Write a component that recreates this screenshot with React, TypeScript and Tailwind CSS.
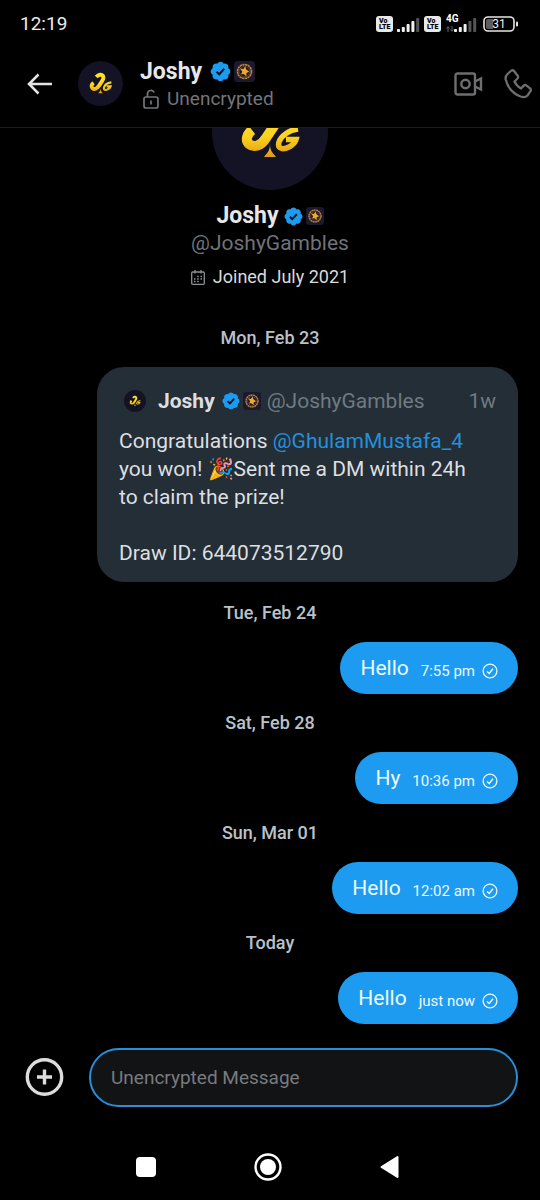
import React from 'react';

function JoshyLogo({ className }: { className: string }) {
  return (
    <svg viewBox="0 0 116 116" className={className} role="img" aria-label="Joshy">
      <defs>
        <linearGradient id="gold" gradientUnits="userSpaceOnUse" x1="0" y1="30" x2="0" y2="84">
          <stop offset="0" stopColor="#ffe32e" />
          <stop offset=".6" stopColor="#fcd31f" />
          <stop offset="1" stopColor="#dc9a12" />
        </linearGradient>
      </defs>
      <circle cx="58" cy="58" r="58" fill="#131325" />
      <g fill="none" stroke="url(#gold)">
        <path d="M47 41C53 34 61 34 64 38C67 42 66 46 62 52L54 64C49 72 42 74 37 70C33 66 35 60 40 56" strokeWidth="10" />
        <path d="M86 55C77 56 69 62 67 68C65 75 71 76 77 73C81 71 83 69 84 65.500H74" strokeWidth="5.500" />
      </g>
      <path d="M58 70C58 77 61 79 64 83H52C55 79 58 77 58 70Z" fill="url(#gold)" />
    </svg>
  );
}

function VerifiedBadge({ className }: { className: string }) {
  return (
    <svg viewBox="0 0 22 22" className={className} role="img" aria-label="Verified">
      <path
        fill="#1d9bf0"
        d="M20.396 11c-.018-.646-.215-1.275-.57-1.816-.354-.54-.852-.972-1.438-1.246.223-.607.27-1.264.14-1.897-.131-.634-.437-1.218-.882-1.687-.47-.445-1.053-.75-1.687-.882-.633-.13-1.29-.083-1.897.14-.273-.587-.704-1.086-1.245-1.44S11.647 1.62 11 1.604c-.646.017-1.273.213-1.813.568s-.969.854-1.24 1.44c-.608-.223-1.267-.272-1.902-.14-.635.13-1.22.436-1.69.882-.445.47-.749 1.055-.878 1.688-.13.633-.08 1.29.144 1.896-.587.274-1.087.705-1.443 1.245-.356.54-.555 1.17-.574 1.817.02.647.218 1.276.574 1.817.356.54.856.972 1.443 1.245-.224.606-.274 1.263-.144 1.896.13.634.433 1.218.877 1.688.47.443 1.054.747 1.687.878.633.132 1.29.084 1.897-.136.274.586.705 1.084 1.246 1.439.54.354 1.17.551 1.816.569.647-.016 1.276-.213 1.817-.567s.972-.854 1.245-1.44c.604.239 1.266.296 1.903.164.636-.132 1.22-.447 1.68-.907.46-.46.776-1.044.908-1.681s.075-1.299-.165-1.903c.586-.274 1.084-.705 1.439-1.246.354-.54.551-1.17.569-1.816z"
      />
      <path d="M7.2 11.2L9.8 13.7L14.5 8.4" fill="none" stroke="#07131c" strokeWidth="2" />
    </svg>
  );
}

function AffiliateBadge({ className }: { className: string }) {
  return (
    <svg viewBox="0 0 22 22" className={className} role="img" aria-label="Affiliate">
      <rect width="22" height="22" rx="4" fill="#1b1830" />
      <circle cx="11" cy="11" r="7.3" fill="none" stroke="#b88338" strokeWidth="1.8" strokeDasharray="2.4 .5" />
      <circle cx="11" cy="11" r="5.4" fill="none" stroke="#79502a" strokeWidth=".7" />
      <path d="M6.200 7.500L9.500 8.600L11.800 5.600L12.600 8.700L16 11.300L13 12.700L13.100 16.200L10.200 13.700L7.400 14L8.700 11.200Z" fill="#f0a72b" />
    </svg>
  );
}

function VoLte() {
  return (
    <span className="flex h-4 w-[17px] flex-col justify-center rounded-[3px] bg-[#e8e8e8] pl-[3px] text-[7px] leading-[6px] font-black text-black">
      <span>Vo</span>
      <span>LTE</span>
    </span>
  );
}

function Signal({ lit, className }: { lit: number; className: string }) {
  const bars = [3, 5, 8, 11, 14];
  return (
    <svg viewBox="0 0 23 15" className={className} aria-hidden="true">
      {bars.map((h, i) => (
        <rect key={h} x={i * 4.8} y={15 - h} width="3" height={h} rx=".8" fill={i < lit ? '#f0f0f0' : '#555'} />
      ))}
    </svg>
  );
}

function StatusBar() {
  return (
    <div className="flex h-12 shrink-0 items-center justify-between pr-[22px] pl-5">
      <span className="text-[19px] leading-6 text-[#ececec]">12:19</span>
      <div className="flex items-center">
        <VoLte />
        <Signal lit={4} className="ml-1 h-[15px] w-[23px]" />
        <span className="ml-1 flex">
          <VoLte />
        </span>
        <div className="relative ml-[5px] flex h-4 w-[31px] items-end justify-end">
          <Signal lit={3} className="h-[15px] w-[23px]" />
          <span className="absolute -top-[2px] left-0 text-[10px] leading-[10px] font-bold text-white">4G</span>
          <svg viewBox="0 0 8 6" className="absolute bottom-0 left-0 h-[6px] w-2" aria-hidden="true">
            <path d="M2 6V1M.5 2.5L2 .7L3.5 2.5M6 0V5M4.5 3.5L6 5.3L7.500 3.500" stroke="#666" fill="none" />
          </svg>
        </div>
        <svg viewBox="0 0 35 16" className="ml-[6px] h-4 w-[35px]" role="img" aria-label="Battery 31 percent">
          <rect x="1" y="1" width="30" height="14" rx="4" fill="none" stroke="#e6e6e6" strokeWidth="1.600" />
          <path d="M5 3h5v10H5a2 2 0 0 1-2-2V5a2 2 0 0 1 2-2z" fill="#5c5c5c" />
          <rect x="33" y="5.500" width="2" height="5" rx="1" fill="#e6e6e6" />
          <text x="16" y="12" textAnchor="middle" fontSize="12" fill="#f2f2f2">31</text>
        </svg>
      </div>
    </div>
  );
}

function Header() {
  return (
    <header className="flex h-20 shrink-0 items-center border-b border-[#1c1c1e] pr-2 pb-2 pl-[26px]">
      <button aria-label="Back" className="h-7 w-7 shrink-0">
        <svg viewBox="0 0 28 28" className="h-7 w-7">
          <path d="M26 14H3M12.500 4.500L3 14L12.500 23.500" fill="none" stroke="#e4e4e4" strokeWidth="2.500" />
        </svg>
      </button>
      <JoshyLogo className="ml-6 h-[45px] w-[45px] shrink-0" />
      <div className="ml-[17px] flex-1 pt-[2px]">
        <div className="flex items-center">
          <h1 className="text-[23px] leading-7 font-bold text-[#e7e7e8]">Joshy</h1>
          <VerifiedBadge className="ml-[7px] h-[23px] w-[23px]" />
          <AffiliateBadge className="ml-[2px] h-[21px] w-[21px]" />
        </div>
        <div className="flex items-center text-[19px] leading-[26px] text-[#737579]">
          <svg viewBox="0 0 16 20" className="ml-[3px] h-5 w-4" fill="none" stroke="currentColor" strokeWidth="1.700" aria-hidden="true">
            <rect x="1" y="8" width="14" height="11" rx="2" />
            <path d="M4.500 8V5A3.500 3.500 0 0 1 11.200 3.500M8 11.500V15.500" />
          </svg>
          <span className="ml-2">Unencrypted</span>
        </div>
      </div>
      <button aria-label="Video call" className="h-6 w-[29px] shrink-0 text-[#6e6e70]">
        <svg viewBox="0 0 29 24" className="h-6 w-[29px]" fill="none" stroke="currentColor" strokeWidth="2.400">
          <rect x="1.500" y="1.500" width="19.500" height="21" rx="2" />
          <circle cx="11.500" cy="12" r="4.200" />
          <path d="M21 9.500L27 6.500V17.500L21 14.500" />
        </svg>
      </button>
      <button aria-label="Call" className="ml-[21px] h-[30px] w-7 shrink-0 text-[#6e6e70]">
        <svg viewBox="0 0 28 30" className="h-[30px] w-7" fill="none" stroke="currentColor" strokeWidth="2.300" strokeLinejoin="round">
          <path d="M3.500 5L7.500 1.500Q9 .8 10.200 2.200L13.800 7Q14.600 8.300 13.500 9.500L10.500 12.500Q12.500 17 17 19.500L19.800 16.600Q21 15.500 22.300 16.400L26.300 19.600Q27.400 20.800 26.500 22.200L23.500 26.500Q21 29 16.500 27.500C9 24.500 3.500 18 1.700 10.500Q1.200 7 3.500 5Z" />
        </svg>
      </button>
    </header>
  );
}

function Profile() {
  return (
    <section className="flex shrink-0 flex-col items-center">
      <JoshyLogo className="h-[116px] w-[116px]" />
      <div className="mt-3 flex items-center">
        <h2 className="text-[23px] leading-7 font-bold text-[#e7e7e8]">Joshy</h2>
        <VerifiedBadge className="ml-1 h-[21px] w-[21px]" />
        <AffiliateBadge className="ml-[2px] h-[18px] w-[18px]" />
      </div>
      <p className="text-[21px] leading-[26px] text-[#6f7377]">@JoshyGambles</p>
      <p className="mt-2 flex items-center text-[18px] leading-[26px] text-[#d9dadb]">
        <svg viewBox="0 0 14 15" className="mr-2 h-[15px] w-[14px]" fill="none" stroke="#8b8f94" aria-hidden="true">
          <rect x=".7" y="2" width="12.600" height="12.300" rx="1" strokeWidth="1.300" />
          <path d="M4 0V3.500M10 0V3.500" strokeWidth="1.300" />
          <path d="M6.200 6.500h1.500M9.500 6.500h1.500M3 9h1.500M6.200 9h1.500M9.500 9h1.500M3 11.500h1.500M6.200 11.500h1.500" strokeWidth="1.400" />
        </svg>
        Joined July 2021
      </p>
    </section>
  );
}

function DateLabel({ children }: { children: React.ReactNode }) {
  return (
    <p className="flex h-[58px] shrink-0 items-center justify-center text-[18px] leading-6 font-medium text-[#b9c2ca]">
      {children}
    </p>
  );
}

function QuotedPost() {
  return (
    <article className="mb-[2px] ml-auto w-[85%] max-w-[421px] shrink-0 rounded-[27px] bg-[#242e36] px-[22px] pt-5 pb-[15px] text-[#dcdfe1]">
      <div className="flex h-7 items-center text-[21px] leading-7">
        <JoshyLogo className="ml-[5px] h-[22px] w-[22px]" />
        <span className="ml-3 font-bold">Joshy</span>
        <VerifiedBadge className="ml-[6px] h-5 w-5" />
        <AffiliateBadge className="ml-[2px] h-[18px] w-[18px]" />
        <span className="ml-[6px] text-[#6f7a83]">@JoshyGambles</span>
        <span className="ml-auto text-[#6f7a83]">1w</span>
      </div>
      <p className="mt-3 text-[21px] leading-7">
        Congratulations <a href="#profile" className="text-[#2490dc]">@GhulamMustafa_4</a>
        <br />
        you won! 🎉Sent me a DM within 24h
        <br />
        to claim the prize!
        <br />
        <br />
        Draw ID: 644073512790
      </p>
    </article>
  );
}

function Bubble({ text, time }: { text: string; time: string }) {
  return (
    <div className="ml-auto flex h-[52px] w-fit shrink-0 items-center rounded-full bg-[#1d9bf0] px-5 text-[#eef8ff]">
      <span className="text-[21px] leading-7">{text}</span>
      <span className="mt-[6px] ml-3 text-[15px] leading-6">{time}</span>
      <svg viewBox="0 0 16 16" className="mt-[6px] ml-[7px] h-4 w-4" fill="none" stroke="currentColor" role="img" aria-label="Sent">
        <circle cx="8" cy="8" r="6.900" strokeWidth="1.300" />
        <path d="M5 8.500L7.200 10.500L11 5.800" strokeWidth="1.500" />
      </svg>
    </div>
  );
}

const messages = [
  { date: 'Tue, Feb 24', text: 'Hello', time: '7:55 pm' },
  { date: 'Sat, Feb 28', text: 'Hy', time: '10:36 pm' },
  { date: 'Sun, Mar 01', text: 'Hello', time: '12:02 am' },
  { date: 'Today', text: 'Hello', time: 'just now' },
];

function Composer() {
  return (
    <form className="flex shrink-0 items-center pr-[22px] pl-6" onSubmit={(e) => e.preventDefault()}>
      <button type="button" aria-label="Add attachment" className="h-10 w-10 shrink-0">
        <svg viewBox="0 0 40 40" className="h-10 w-10" fill="none" stroke="#dcdcdc">
          <circle cx="20.500" cy="19" r="17.200" strokeWidth="3.400" />
          <path d="M20.500 11.500V26.500M13 19H28" strokeWidth="3.400" />
        </svg>
      </button>
      <input
        aria-label="Unencrypted Message"
        placeholder="Unencrypted Message"
        className="ml-[25px] h-[59px] min-w-0 flex-1 rounded-full border-2 border-[#2a8ed8] bg-[#121315] px-5 text-[19px] text-white outline-none placeholder:text-[#787b7f]"
      />
    </form>
  );
}

function SystemNav() {
  return (
    <nav className="grid h-[93px] shrink-0 grid-cols-[1fr_122px_122px_122px_1fr] items-center justify-items-center pt-[27px] pr-[5px]">
      <span />
      <button aria-label="Recent apps" className="h-5 w-5 rounded bg-white" />
      <button aria-label="Home" className="h-7 w-7">
        <svg viewBox="0 0 28 28" className="h-7 w-7">
          <circle cx="14" cy="14" r="12.500" fill="none" stroke="#fff" strokeWidth="2.400" />
          <circle cx="14" cy="14" r="8" fill="#fff" />
        </svg>
      </button>
      <button aria-label="Back to previous screen" className="h-6 w-5">
        <svg viewBox="0 0 20 24" className="h-6 w-5">
          <path d="M17.500 2V22L1.500 12Z" fill="#fff" stroke="#fff" strokeWidth="2" strokeLinejoin="round" />
        </svg>
      </button>
    </nav>
  );
}

export default function App() {
  return (
    <div className="flex h-screen flex-col overflow-hidden bg-black font-['Roboto',sans-serif]">
      <StatusBar />
      <Header />
      <main className="flex min-h-0 flex-1 flex-col justify-end overflow-hidden px-[22px] pb-6">
        <Profile />
        <div className="mt-[19px] flex shrink-0 flex-col">
          <DateLabel>Mon, Feb 23</DateLabel>
          <QuotedPost />
          {messages.map((m) => (
            <React.Fragment key={m.date}>
              <DateLabel>{m.date}</DateLabel>
              <Bubble text={m.text} time={m.time} />
            </React.Fragment>
          ))}
        </div>
      </main>
      <Composer />
      <SystemNav />
    </div>
  );
}
